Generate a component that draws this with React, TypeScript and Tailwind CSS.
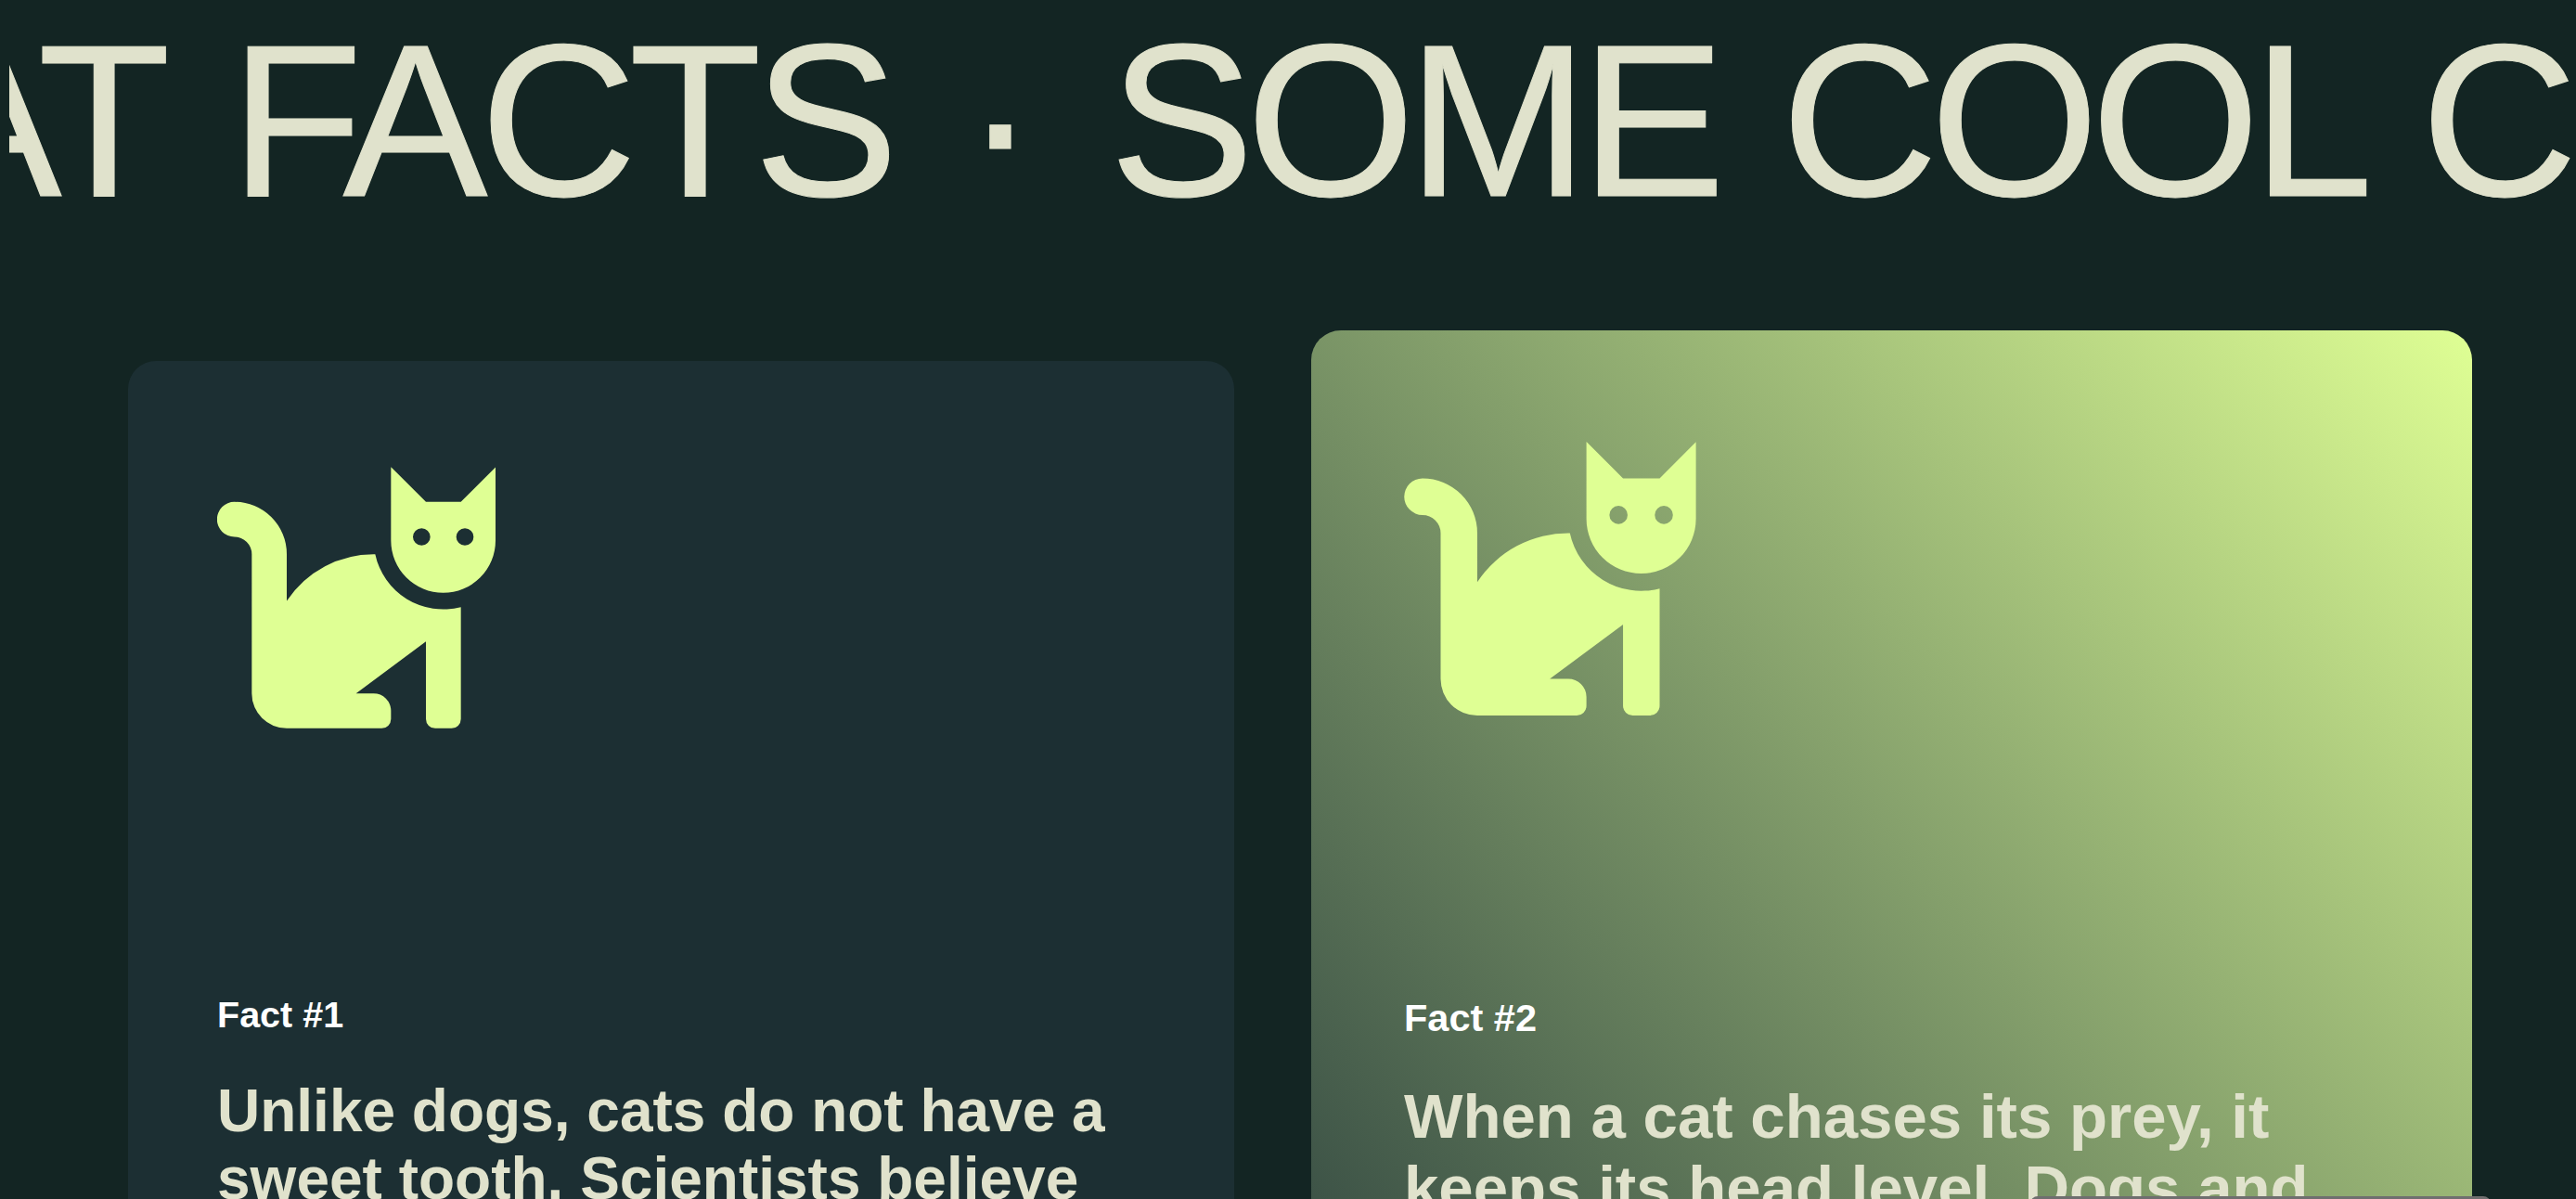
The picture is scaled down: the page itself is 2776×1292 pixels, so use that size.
const catPath =
  'M664 100L777 213H890L1002 101V338A169 169 0 0 1 664 338ZM763 298A28 28 0 1 0 763 354A28 28 0 1 0 763 298ZM903 298A28 28 0 1 0 903 354A28 28 0 1 0 903 298ZM158 213A169 169 0 0 1 327 382V533A337 337 0 0 1 613 382A225 225 0 0 0 890 553V915A30 30 0 0 1 860 945H807A30 30 0 0 1 777 915V664L551 832H608A56 56 0 0 1 664 888V915A30 30 0 0 1 634 945H327A113 113 0 0 1 214 832V382A56 56 0 0 0 158 326A56.5 56.5 0 0 1 158 213Z'

function CatIcon({ className }: { className: string }) {
  return (
    <svg viewBox="102 100 900 845" className={className} fill="#dfff94" fillRule="evenodd">
      <path d={catPath} />
    </svg>
  )
}

export default function App() {
  return (
    <div className="relative h-[1292px] overflow-hidden bg-[#132523] font-['Liberation_Sans',Arial,sans-serif]">
      <div className="ml-[10px] overflow-hidden pt-[8px]">
        <div className="-ml-[260px] whitespace-nowrap text-[234px] leading-[1.05] tracking-[-0.036em] text-[#e0e2cc] [-webkit-text-stroke:1px_#e0e2cc] [word-spacing:12px]">
          <span className="mr-[4px]">CAT</span> FACTS
          <span className="ml-[79px] mr-[87px] inline-block">·</span>
          SOME COOL C<span className="ml-[12px]">AT FACTS</span>
        </div>
      </div>

      <div className="flex items-start pl-[138px] pt-[135px]">
        <div className="h-[1200px] w-[1192px] shrink-0 rounded-[30px] bg-[#1c2f33] px-[96px] pt-[114px]">
          <CatIcon className="h-[282px] w-[300px]" />
          <p className="mt-[285px] text-[39.5px] font-bold leading-[1.2] text-white">Fact #1</p>
          <p className="mt-[44px] text-[64px] font-bold leading-[73px] text-[#e0e2cc]">
            Unlike dogs, cats do not have a sweet tooth. Scientists believe this is due to a mutation.
          </p>
        </div>

        <div className="-mt-[33px] ml-[83px] h-[1400px] w-[1251px] shrink-0 rounded-[32px] bg-gradient-to-tr from-[#1c2f33] from-[-4%] to-[#dfff94] px-[100px] pt-[120px]">
          <CatIcon className="h-[295px] w-[315px]" />
          <p className="mt-[301px] text-[41.5px] font-bold leading-[1.2] text-white">Fact #2</p>
          <p className="mt-[43px] text-[67.2px] font-bold leading-[77px] text-[#e0e2cc]">
            When a cat chases its prey, it keeps its head level. Dogs and humans bob their heads.
          </p>
        </div>
      </div>

      {/* popup peeking in at the bottom edge */}
      <div className="absolute left-[2188px] top-[1289px] h-[40px] w-[496px] rounded-t-[8px] bg-[#6f6f6f]" />
    </div>
  )
}
